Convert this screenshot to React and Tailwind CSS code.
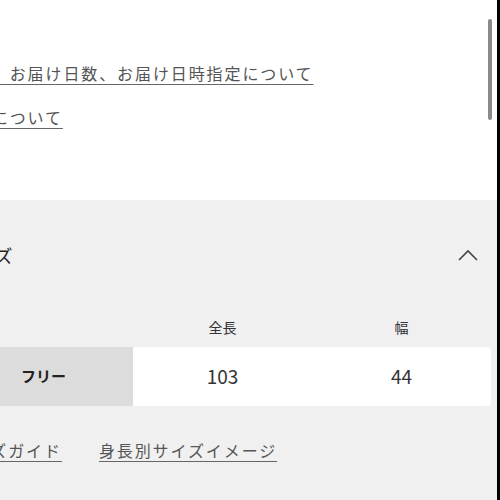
import React from "react";

const jp = { fontFamily: '"Noto Sans CJK JP", "Noto Sans", sans-serif' };

function Link({ children }) {
  return (
    <span className="underline decoration-[#666] decoration-1 underline-offset-[4px] text-[#555] text-[16px] leading-[24px] tracking-[1.9px] whitespace-nowrap">
      {children}
    </span>
  );
}

export default function App() {
  return (
    <div className="w-[500px] h-[500px] overflow-hidden flex bg-white relative" style={jp}>
      <div className="flex-1 flex flex-col min-w-0">
        <div className="h-[200px] bg-white pt-[61px] ml-[-44px] flex flex-col gap-[20px]">
          <div><Link>送料、お届け日数、お届け日時指定について</Link></div>
          <div><Link>返品について</Link></div>
        </div>
        <div className="flex-1 bg-[#f0f0f0] pt-[43px] pr-[6px]">
          <div className="flex items-center justify-between ml-[-42px] pr-[12px]">
            <span className="text-[18px] leading-[24px] text-[#222] tracking-[0.5px]">サイズ</span>
            <svg width="22" height="14" viewBox="0 0 22 14" fill="none" stroke="#444" strokeWidth="1.6">
              <path d="M2 12 L11 3 L20 12" />
            </svg>
          </div>
          <div className="ml-[-46px] mt-[50px]">
            <div className="grid grid-cols-3 h-[20px] items-center text-[14px] leading-[20px] text-[#333]">
              <div></div>
              <div className="text-center">全長</div>
              <div className="text-center">幅</div>
            </div>
            <div className="grid grid-cols-3 h-[59px] mt-[10px] items-center">
              <div className="h-full bg-[#dcdcdc] flex items-center justify-center text-[15px] font-bold text-[#222]">フリー</div>
              <div className="h-full bg-white flex items-center justify-center text-[19px] text-[#333]">103</div>
              <div className="h-full bg-white rounded-r-[4px] flex items-center justify-center text-[19px] text-[#333]">44</div>
            </div>
          </div>
          <div className="ml-[-45px] mt-[32px] flex gap-[37px]">
            <Link>サイズガイド</Link>
            <Link>身長別サイズイメージ</Link>
          </div>
        </div>
      </div>
      <div className="w-[3px] bg-black"></div>
      <div className="absolute left-[488px] top-[19px] w-[4px] h-[101px] rounded-full bg-[#8a8a8a]"></div>
    </div>
  );
}
